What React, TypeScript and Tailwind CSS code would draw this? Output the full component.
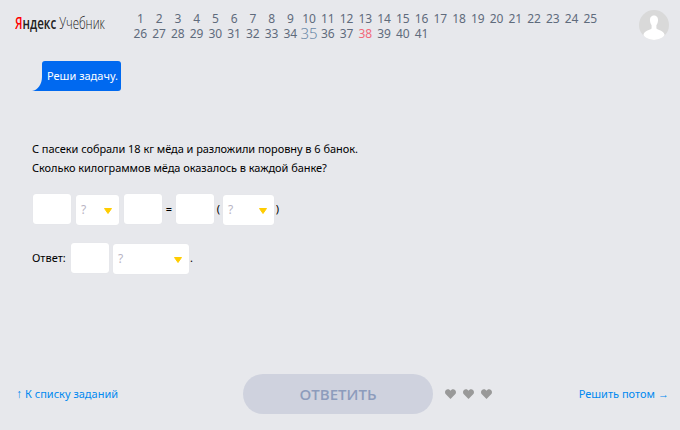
const taskNumbers = Array.from({ length: 41 }, (_, i) => i + 1)

function Input() {
  return <div className="h-[30px] w-[38px] rounded-[3px] bg-white shadow-[0_0_1px_rgba(0,0,0,0.06)]" />
}

function Select({ width }: { width: string }) {
  return (
    <div
      className={`mt-[1px] flex h-[30px] items-center justify-between rounded-[3px] bg-white pl-[5px] pr-[7px] shadow-[0_0_1px_rgba(0,0,0,0.06)] ${width}`}
    >
      <span className="text-[12px] leading-none text-[#b9b4c4]">?</span>
      <svg width="8" height="6" viewBox="0 0 8 6" className="mt-[1px]">
        <path d="M0.5 0.5 H7.5 L4 5.5 Z" fill="#fc0" stroke="#fc0" strokeLinejoin="round" />
      </svg>
    </div>
  )
}

function Heart() {
  return (
    <svg width="11" height="10" viewBox="0 0 11 10">
      <path d="M5.5 10 L0.6 5 C-0.8 3 0.5 0.2 2.9 0.2 C4.1 0.2 5 0.9 5.5 1.7 C6 0.9 6.9 0.2 8.1 0.2 C10.5 0.2 11.8 3 10.4 5 Z" fill="#999" />
    </svg>
  )
}

export default function App() {
  return (
    <div className="flex h-[430px] w-[680px] flex-col overflow-hidden bg-[#e7e8ec] font-['Noto_Sans',sans-serif] text-black">
      <header className="flex h-[50px] items-start">
        <div className="ml-[15px] mt-[12px] flex h-[20px] w-[116px] items-center whitespace-nowrap">
          <span className="origin-left scale-x-[0.68] font-['Open_Sans',sans-serif] text-[17px] leading-none text-[#222]">
            <span className="font-semibold"><span className="text-[#f00]">Я</span>ндекс</span> <span className="font-light">Учебник</span>
          </span>
        </div>
        <div className="mt-[11px] grid w-[470px] grid-cols-[repeat(25,18.75px)] text-center text-[12px] leading-[15px] text-[#5f6b7c]">
          {taskNumbers.map((n) => (
            <span
              key={n}
              className={n === 35 ? "text-[15px] font-light text-[#6b88a8]" : n === 38 ? "text-[#f2697b]" : ""}
            >
              {n}
            </span>
          ))}
        </div>
        <div className="ml-[38px] mt-[10px] flex h-[30px] w-[30px] items-end justify-center overflow-hidden rounded-full bg-[#d9d9d9]">
          <svg width="30" height="30" viewBox="0 0 30 30">
            <path d="M15 5.5 C12 5.5 10.8 8 11 10.5 C11.1 12.5 11.8 14 12.6 15.2 L12.6 18.5 C10 20.5 5.5 20.8 4.5 24.5 L4.5 30 L25.5 30 L25.5 24.5 C24.5 20.8 20 20.5 17.4 18.5 L17.4 15.2 C18.2 14 18.9 12.5 19 10.5 C19.2 8 18 5.5 15 5.5 Z" fill="#fff" />
          </svg>
        </div>
      </header>

      <main className="flex flex-1 flex-col pl-[32px]">
        <div className="relative ml-[10px] mt-[11px] flex h-[30px] w-[79px] items-center whitespace-nowrap rounded-[3px] rounded-bl-none bg-[#0069f0] pl-[5px] text-[11px] text-white">
          Реши задачу.
          <svg width="10" height="14" viewBox="0 0 10 14" className="absolute bottom-0 left-[-10px]">
            <path d="M10 0 C10 7 6 13 0 14 L10 14 Z" fill="#0069f0" />
          </svg>
        </div>

        <div className="mt-[48px] text-[11px] leading-[19px] tracking-[-0.05px]">
          <p>С пасеки собрали 18 кг мёда и разложили поровну в 6 банок.</p>
          <p>Сколько килограммов мёда оказалось в каждой банке?</p>
        </div>

        <div className="ml-[1px] mt-[17px] flex items-start text-[11px]">
          <Input />
          <div className="ml-[5px]"><Select width="w-[43px]" /></div>
          <div className="ml-[5px]"><Input /></div>
          <span className="flex h-[31px] w-[14px] items-center justify-center">=</span>
          <Input />
          <span className="flex h-[31px] w-[9px] items-center justify-center">(</span>
          <Select width="w-[51px]" />
          <span className="flex h-[31px] w-[7px] items-center justify-center">)</span>
        </div>

        <div className="mt-[18px] flex items-start text-[11px]">
          <span className="flex h-[31px] w-[39px] items-center">Ответ:</span>
          <Input />
          <div className="ml-[4px]"><Select width="w-[76px]" /></div>
          <span className="ml-[1px] flex h-[31px] items-center">.</span>
        </div>
      </main>

      <footer className="relative mb-[16px] flex h-[40px] items-center text-[11px] text-[#0088f0]">
        <a className="ml-[16px] flex w-[227px] items-center gap-[3px]">
          <span className="text-[12px]">↑</span>К списку заданий
        </a>
        <button className="h-[40px] w-[190px] rounded-[20px] bg-[#cfd2de] font-['Open_Sans',sans-serif] text-[15px] font-semibold text-[#8d9cbc]">
          ОТВЕТИТЬ
        </button>
        <div className="ml-[12px] flex gap-[7px]">
          <Heart />
          <Heart />
          <Heart />
        </div>
        <a className="ml-auto mr-[11px] flex items-center gap-[3px]">
          Решить потом <span>→</span>
        </a>
      </footer>
    </div>
  )
}
